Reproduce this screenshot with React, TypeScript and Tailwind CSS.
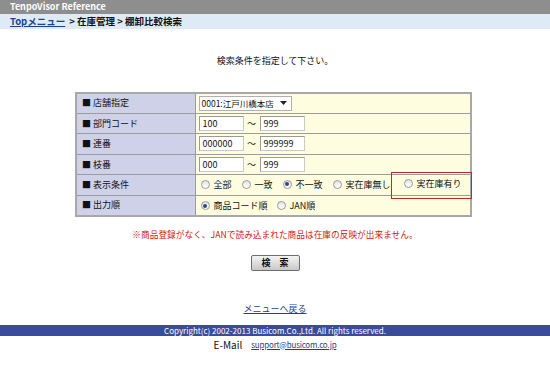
import type { ReactNode } from 'react'

const font = { fontFamily: '"MS PGothic", "Noto Sans CJK JP", "Liberation Sans", sans-serif' }

function Radio({ checked, label }: { checked?: boolean; label: string }) {
  return (
    <span className="inline-flex items-center gap-[4px]">
      <span className="w-[9px] h-[9px] rounded-full border border-[#9a9a9a] bg-gradient-to-b from-[#e4e4e4] to-white flex items-center justify-center">
        {checked && <span className="w-[4px] h-[4px] rounded-full bg-[#2a4a8a]" />}
      </span>
      <span>{label}</span>
    </span>
  )
}

function Row({ label, children }: { label: string; children: ReactNode }) {
  return (
    <tr className="h-[20.5px]">
      <td className="w-[119px] bg-[#cfd1e8] border border-[#9c9c9c] pl-[5px] align-middle">■ {label}</td>
      <td className="bg-[#fffde0] border border-[#9c9c9c] pl-[3px] align-middle">{children}</td>
    </tr>
  )
}

function Input({ value }: { value: string }) {
  return (
    <span className="inline-flex items-center w-[45px] h-[15px] bg-white border border-[#c8c8c8] border-t-[#9a9a9a] border-l-[#9a9a9a] pl-[3px] text-[9px]">
      {value}
    </span>
  )
}

function Range({ from, to }: { from: string; to: string }) {
  return (
    <span className="inline-flex items-center">
      <Input value={from} />
      <span className="w-[16px] text-center">～</span>
      <Input value={to} />
    </span>
  )
}

export default function App() {
  return (
    <div className="w-[550px] h-[367px] bg-white text-[9px] text-[#111] flex flex-col" style={font}>
      <div className="h-[14px] bg-[#8e8e8e] text-white font-bold pl-[10px] flex items-center text-[9px]">
        TenpoVisor Reference
      </div>
      <div className="h-[15px] bg-[#deebf7] pl-[10px] flex items-center font-bold text-[9.5px]">
        <span className="text-[#1f3f8f] underline">Topメニュー</span>
        <span className="ml-[4px]">&gt; 在庫管理 &gt; 棚卸比較検索</span>
      </div>

      <div className="mt-[25px] text-center">検索条件を指定して下さい。</div>

      <div className="relative ml-[75px] mt-[24px] w-[397px]">
        <table className="w-full border-collapse border-2 border-[#a8a8a8]">
          <tbody>
            <Row label="店舗指定">
              <span className="inline-flex items-center justify-between w-[93px] h-[15px] bg-white border border-[#b0b0b0] pl-[2px] pr-[4px] text-[8.5px]">
                <span>0001:江戸川橋本店</span>
                <svg width="7" height="4" viewBox="0 0 7 4">
                  <path d="M0 0h7L3.5 4z" fill="#222" />
                </svg>
              </span>
            </Row>
            <Row label="部門コード">
              <Range from="100" to="999" />
            </Row>
            <Row label="連番">
              <Range from="000000" to="999999" />
            </Row>
            <Row label="枝番">
              <Range from="000" to="999" />
            </Row>
            <Row label="表示条件">
              <span className="inline-flex items-center gap-[10px] pl-[2px]">
                <Radio label="全部" />
                <Radio label="一致" />
                <Radio checked label="不一致" />
                <Radio label="実在庫無し" />
                <span className="ml-[3px]">
                  <Radio label="実在庫有り" />
                </span>
              </span>
            </Row>
            <Row label="出力順">
              <span className="inline-flex items-center gap-[9px] pl-[2px]">
                <Radio checked label="商品コード順" />
                <Radio label="JAN順" />
              </span>
            </Row>
          </tbody>
        </table>
        <div className="absolute left-[316px] top-[80px] w-[81px] h-[27px] border-[1.5px] border-[#c0282d]" />
      </div>

      <div className="mt-[11px] text-center text-[#d01818] text-[8.7px]">
        ※商品登録がなく、JANで読み込まれた商品は在庫の反映が出来ません。
      </div>

      <div className="mt-[14px] flex justify-center">
        <button className="w-[49px] h-[16px] border border-[#6e6e6e] rounded-[2px] bg-gradient-to-b from-[#f4f4f4] to-[#c8c8c8] text-[9px] font-bold flex items-center justify-center">
          検　索
        </button>
      </div>

      <div className="mt-[31px] text-center">
        <span className="text-[#1f3f8f] underline">メニューへ戻る</span>
      </div>

      <div className="mt-[10px] h-[11px] bg-[#3b4b9b] text-white text-[8px] flex items-center justify-center">
        Copyright(c) 2002-2013 Busicom.Co.,Ltd. All rights reserved.
      </div>
      <div className="mt-[1px] flex justify-center items-center gap-[9px] text-[10px]">
        <span>E-Mail</span>
        <span className="text-[#1f3f8f] underline text-[8px] tracking-[-0.2px]">support@busicom.co.jp</span>
      </div>
    </div>
  )
}
